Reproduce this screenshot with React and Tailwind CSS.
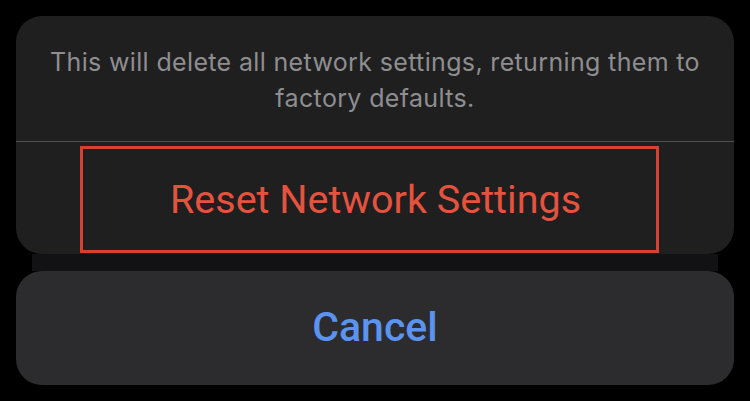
export default function App() {
  return (
    <div
      className="w-[750px] h-[401px] bg-black overflow-hidden flex flex-col pt-4"
      style={{ fontFamily: "Roboto, 'Liberation Sans', sans-serif" }}
    >
      <div className="mx-4 h-[238px] rounded-[26px] bg-[#1f1f20] flex flex-col">
        <div className="h-[125px] flex items-center justify-center px-6 pt-[2px]">
          <p
            className="text-center text-[25px] leading-[36px] text-[#8e8e90] tracking-[0.35px]"
            style={{ fontFamily: "Inter, Roboto, sans-serif" }}
          >
            This will delete all network settings, returning them to factory defaults.
          </p>
        </div>
        <div className="h-px bg-[#505052]" />
        <div className="flex-1 flex justify-start pl-[64px] pt-[4px]">
          <div className="w-[579px] h-[107px] border-[3px] border-[#d8412f] flex items-center justify-center pl-[12px]">
            <span className="text-[39.5px] text-[#e5533f]">Reset Network Settings</span>
          </div>
        </div>
      </div>
      <div className="mx-8 h-[17px] bg-[#121214]" />
      <div className="mx-4 h-[114px] rounded-[26px] bg-[#2c2c2e] flex items-center justify-center">
        <span className="text-[41px] font-medium text-[#5b93ee]">Cancel</span>
      </div>
    </div>
  );
}
